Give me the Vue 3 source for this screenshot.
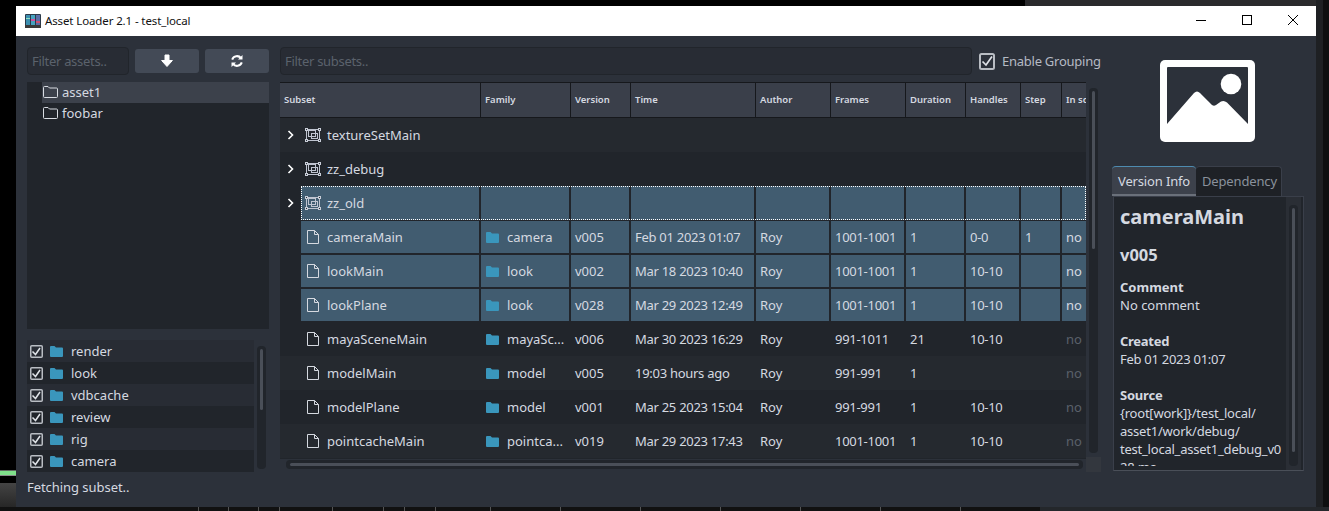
<script setup>
const families = ['render', 'look', 'vdbcache', 'review', 'rig', 'camera']
const cols = ['Subset', 'Family', 'Version', 'Time', 'Author', 'Frames', 'Duration', 'Handles', 'Step', 'In scene']
const groups = [
  { name: 'textureSetMain', alt: true },
  { name: 'zz_debug' },
  { name: 'zz_old', sel: true, focus: true }
]
const rows = [
  { name: 'cameraMain', fam: 'camera', ver: 'v005', time: 'Feb 01 2023 01:07', fr: '1001-1001', dur: '1', han: '0-0', step: '1', sel: true, alt: true },
  { name: 'lookMain', fam: 'look', ver: 'v002', time: 'Mar 18 2023 10:40', fr: '1001-1001', dur: '1', han: '10-10', step: '', sel: true },
  { name: 'lookPlane', fam: 'look', ver: 'v028', time: 'Mar 29 2023 12:49', fr: '1001-1001', dur: '1', han: '10-10', step: '', sel: true, alt: true },
  { name: 'mayaSceneMain', fam: 'mayaSc...', ver: 'v006', time: 'Mar 30 2023 16:29', fr: '991-1011', dur: '21', han: '10-10', step: '' },
  { name: 'modelMain', fam: 'model', ver: 'v005', time: '19:03 hours ago', fr: '991-991', dur: '1', han: '', step: '', alt: true },
  { name: 'modelPlane', fam: 'model', ver: 'v001', time: 'Mar 25 2023 15:04', fr: '991-991', dur: '1', han: '10-10', step: '' },
  { name: 'pointcacheMain', fam: 'pointca...', ver: 'v019', time: 'Mar 29 2023 17:43', fr: '1001-1001', dur: '1', han: '10-10', step: '', alt: true }
]
</script>

<template>
  <div class="desktop">
    <div class="strip-top"></div>
    <div class="strip-left"></div>
    <div class="strip-right"></div>
    <svg class="strip-bottom" width="1329" height="4" viewBox="0 0 1329 4">
      <path d="M198.500 0V4M228.500 0V4M258.500 0V4M279.500 0V4M332.500 0V4M383.500 0V4M404.500 0V4M435.500 0V4M490.500 0V4M560.500 0V4M640.500 0V4M720.500 0V4M800.500 0V4M880.500 0V4M960.500 0V4" stroke="#555" fill="none" />
    </svg>
    <div class="window">
      <header class="titlebar">
        <svg class="appicon" viewBox="0 0 16 16" width="16" height="16">
          <rect x="0" y="1" width="16" height="14" rx="1" fill="#2b3a4a" />
          <rect x="1" y="2" width="4" height="10" fill="#3c8fb0" />
          <rect x="6" y="2" width="4" height="10" fill="#46a3c0" />
          <rect x="11" y="2" width="4" height="10" fill="#5a6fa8" />
          <rect x="6" y="6" width="4" height="2" fill="#d050a0" />
          <rect x="11" y="8" width="4" height="2" fill="#d05070" />
          <rect x="1" y="5" width="4" height="1" fill="#8fe0c0" />
          <rect x="0" y="12" width="16" height="3" fill="#3a3a3a" />
        </svg>
        <span class="title">Asset Loader 2.1 - test_local</span>
        <div class="winbtns">
          <svg width="10" height="10" viewBox="0 0 10 10"><path d="M0 5.500H10" stroke="#000" fill="none" /></svg>
          <svg width="10" height="10" viewBox="0 0 10 10"><rect x=".5" y=".5" width="9" height="9" stroke="#000" fill="none" /></svg>
          <svg width="10" height="10" viewBox="0 0 10 10"><path d="M0 0L10 10M10 0L0 10" stroke="#000" fill="none" /></svg>
        </div>
      </header>

      <div class="content">
        <aside class="left">
          <div class="toolbar">
            <div class="input assets">Filter assets..</div>
            <button class="btn">
              <svg width="14" height="14" viewBox="0 0 14 14"><path d="M5 1h4v5.500h3.400L7 12.500 1.600 6.500H5z" fill="#fff" stroke="#fff" stroke-linejoin="round" /></svg>
            </button>
            <button class="btn">
              <svg width="14" height="14" viewBox="0 0 14 14" fill="none" stroke="#fff" stroke-width="2">
                <path d="M2.200 5.600A5 5 0 0 1 11 4.200" />
                <path d="M11.800 8.400A5 5 0 0 1 3 9.800" />
                <path d="M12.500 1v4.500H8z" fill="#fff" stroke="none" />
                <path d="M1.500 13V8.500H6z" fill="#fff" stroke="none" />
              </svg>
            </button>
          </div>
          <div class="tree">
            <div class="tree-row on">
              <svg class="folder" width="15" height="12" viewBox="0 0 15 12"><path d="M1.500 11.500a1 1 0 0 1-1-1V1.500a1 1 0 0 1 1-1h3.500l1.500 1.500h7a1 1 0 0 1 1 1v7.500a1 1 0 0 1-1 1z" fill="none" stroke="#d8dce2" /></svg>
              <span>asset1</span>
            </div>
            <div class="tree-row">
              <svg class="folder" width="15" height="12" viewBox="0 0 15 12"><path d="M1.500 11.500a1 1 0 0 1-1-1V1.500a1 1 0 0 1 1-1h3.500l1.500 1.500h7a1 1 0 0 1 1 1v7.500a1 1 0 0 1-1 1z" fill="none" stroke="#d8dce2" /></svg>
              <span>foobar</span>
            </div>
          </div>
          <div class="families">
            <div class="fam-list">
              <div v-for="f in families" :key="f" class="fam-row">
                <svg class="check" width="13" height="13" viewBox="0 0 13 13"><rect x=".75" y=".75" width="11.500" height="11.500" rx="1" fill="none" stroke="#b9bdc3" stroke-width="1.500" /><path d="M2.500 6.500l3 3 4.500-6.500" fill="none" stroke="#e0e3e8" stroke-width="1.500" /></svg>
                <svg class="ficon" width="13" height="11" viewBox="0 0 13 11"><path d="M0 1a1 1 0 0 1 1-1h3.500l1.500 1.500h6a1 1 0 0 1 1 1V10a1 1 0 0 1-1 1H1a1 1 0 0 1-1-1z" fill="#3a96bc" /></svg>
                <span>{{ f }}</span>
              </div>
            </div>
            <div class="vbar fam-bar"><div class="vthumb"></div></div>
          </div>
        </aside>

        <main class="middle">
          <div class="toolbar">
            <div class="input subsets">Filter subsets..</div>
            <label class="group">
              <svg width="16" height="17" viewBox="0 0 16 17"><rect x="1" y="1" width="14" height="15" rx="1.500" fill="none" stroke="#b9bdc3" stroke-width="2" /><path d="M3.500 8.500l3.500 3.500 6-8.500" fill="none" stroke="#e0e3e8" stroke-width="1.700" /></svg>
              <span>Enable Grouping</span>
            </label>
          </div>
          <div class="table-wrap">
            <div class="table-col">
              <div class="table">
                <div class="grid head">
                  <div v-for="c in cols" :key="c" class="th">{{ c }}</div>
                </div>
                <div v-for="g in groups" :key="g.name" class="line" :class="{ alt: g.alt, sel: g.sel, focus: g.focus }">
                  <div class="branch">
                    <svg width="8" height="10" viewBox="0 0 8 10"><path d="M1.500 1l4 4-4 4" fill="none" stroke="#fff" stroke-width="1.600" /></svg>
                  </div>
                  <div class="grid cells">
                    <div class="td first">
                      <svg class="gicon" width="16" height="15" viewBox="0 0 16 15" fill="none" stroke="#bfc4d0">
                        <rect x="1.500" y="1.500" width="13" height="11" />
                        <rect x="3.500" y="2.500" width="7" height="6" />
                        <rect x="6.500" y="5.500" width="6" height="5" />
                        <g fill="#2c313a" stroke="#c9ced8"><rect x=".5" y=".5" width="2" height="2" /><rect x="13.500" y=".5" width="2" height="2" /><rect x=".5" y="11.500" width="2" height="2" /><rect x="13.500" y="11.500" width="2" height="2" /></g>
                      </svg>
                      <span class="name">{{ g.name }}</span>
                    </div>
                    <div v-for="n in 9" :key="n" class="td"></div>
                  </div>
                </div>
                <div v-for="r in rows" :key="r.name" class="line" :class="{ alt: r.alt, sel: r.sel }">
                  <div class="branch"></div>
                  <div class="grid cells">
                    <div class="td first">
                      <svg class="dicon" width="12" height="14" viewBox="0 0 12 14"><path d="M.5.500H7.500L11.500 4.500V13.500H.5zM7.500.500V4.500H11.500" fill="none" stroke="#d5d9e0" /></svg>
                      <span class="name">{{ r.name }}</span>
                    </div>
                    <div class="td fam">
                      <svg class="ficon" width="13" height="11" viewBox="0 0 13 11"><path d="M0 1a1 1 0 0 1 1-1h3.500l1.500 1.500h6a1 1 0 0 1 1 1V10a1 1 0 0 1-1 1H1a1 1 0 0 1-1-1z" fill="#3a96bc" /></svg>
                      <span>{{ r.fam }}</span>
                    </div>
                    <div class="td">{{ r.ver }}</div>
                    <div class="td num">{{ r.time }}</div>
                    <div class="td">Roy</div>
                    <div class="td num">{{ r.fr }}</div>
                    <div class="td">{{ r.dur }}</div>
                    <div class="td num">{{ r.han }}</div>
                    <div class="td">{{ r.step }}</div>
                    <div class="td no">no</div>
                  </div>
                </div>
              </div>
              <div class="hbar"><div class="hthumb"></div></div>
            </div>
            <div class="side">
              <div class="vbar tbl-bar"><div class="vthumb"></div></div>
              <div class="corner"></div>
            </div>
          </div>
        </main>

        <aside class="right">
          <div class="thumb-wrap">
            <svg width="95" height="82" viewBox="0 0 95 82">
              <rect x="0" y="0" width="95" height="82" rx="5" fill="#fff" />
              <rect x="7" y="7" width="81" height="68" fill="#2c313a" rx="1" />
              <path d="M7 64L34 33Q37 30 40 33L52 45Q54 46.500 56 45L61 41.500Q64 40 67 42.500L88 64V75H7z" fill="#fff" />
              <circle cx="71" cy="24" r="10.300" fill="#fff" />
            </svg>
          </div>
          <div class="tabs">
            <div class="tab on">Version Info</div>
            <div class="tab">Dependency</div>
          </div>
          <div class="pane">
            <div class="pane-text">
              <h1>cameraMain</h1>
              <h2>v005</h2>
              <p class="sect"><b>Comment</b><br />No comment</p>
              <p class="sect num"><b>Created</b><br />Feb 01 2023 01:07</p>
              <p class="sect src"><b>Source</b><br />{root[work]}/test_local/<br />asset1/work/debug/<br />test_local_asset1_debug_v0<br />28.ma</p>
            </div>
            <div class="gutter"><div class="vbar pane-bar"><div class="vthumb"></div></div></div>
          </div>
        </aside>
      </div>

      <footer class="status">Fetching subset..</footer>
    </div>
  </div>
</template>

<style>
html, body { margin: 0; background: #000; overflow: hidden; }
</style>

<style scoped>
.desktop {
  position: relative;
  width: 1329px;
  height: 511px;
  overflow: hidden;
  box-sizing: border-box;
  padding: 6px 0 0 16px;
  background: #000;
  font-family: "Noto Sans", sans-serif;
  font-size: 13px;
  color: #d5d9e0;
}
.strip-top { position: absolute; left: 1025px; right: 0; top: 0; height: 6px; background: #2a2a2c; }
.strip-left { position: absolute; left: 0; top: 469px; width: 16px; height: 42px; background: linear-gradient(#000 0, #000 1px, #5f6a60 1px, #5f6a60 2px, #7fe08a 2px, #7fe08a 6px, #8a8a8a 6px, #8a8a8a 7px, #000 7px, #000 14px, #444 14px, #222 42px); }
.strip-right { position: absolute; left: 1316px; right: 0; top: 0; bottom: 0; background: #1e2023; border-right: 6px solid #0e0f10; box-sizing: border-box; }
.strip-bottom { position: absolute; left: 0; top: 507px; background: linear-gradient(90deg, #111 0, #111 1040px, #24272b 1040px); }
.window {
  position: relative;
  width: 1300px;
  height: 501px;
  display: flex;
  flex-direction: column;
  background: #2c313a;
}
.titlebar {
  height: 30px;
  flex: none;
  box-sizing: border-box;
  background: #fff;
  display: flex;
  align-items: center;
  padding-left: 9px;
  padding-bottom: 1px;
  color: #000;
}
.appicon { flex: none; }
.title { margin-left: 4px; font-size: 11.500px; letter-spacing: -0.12px; color: #111; }
.winbtns {
  margin-left: auto;
  display: flex;
  width: 138px;
  justify-content: space-around;
  align-items: center;
  padding-bottom: 1px;
}
.content {
  flex: none;
  height: 425px;
  display: grid;
  grid-template-columns: 242px 821px 192px;
  column-gap: 11px;
  padding-left: 11px;
  padding-top: 11px;
}
.left, .middle, .right { display: flex; flex-direction: column; min-width: 0; height: 425px; }
.toolbar { display: flex; align-items: center; height: 28px; flex: none; }
.input {
  box-sizing: border-box;
  height: 28px;
  line-height: 26px;
  border: 1px solid #21252b;
  border-radius: 4px;
  background: #282c34;
  color: #5b626c;
  padding-left: 4px;
  letter-spacing: -0.3px;
  flex: none;
}
.assets { width: 102px; }
.subsets { width: 692px; }
.btn {
  width: 64px;
  height: 24px;
  margin-left: 6px;
  border: 0;
  border-radius: 3px;
  background: #434a56;
  padding: 0;
  display: flex;
  align-items: center;
  justify-content: center;
}
.tree {
  margin-top: 7px;
  height: 247px;
  flex: none;
  background: #21252b;
  padding-left: 15px;
}
.tree-row { display: flex; align-items: center; height: 21px; box-sizing: border-box; padding: 0 0 2px 1px; gap: 4px; }
.tree-row.on { background: #3c414b; }
.folder { flex: none; }
.families { margin-top: 11px; display: flex; height: 132px; flex: none; }
.fam-list { width: 227px; flex: none; }
.fam-row { display: flex; align-items: center; height: 22px; padding-left: 3px; }
.fam-row:nth-child(odd) { background: #282c34; }
.fam-row:nth-child(even) { background: #21252b; }
.check { flex: none; margin-right: 7px; }
.fam-row .ficon { margin-right: 8px; }
.ficon { flex: none; }
.vbar {
  box-sizing: border-box;
  width: 9px;
  background: #21252b;
  border-radius: 4px;
  padding: 3px 3px 0;
}
.vthumb { width: 100%; background: #4a4f58; border-radius: 2px; }
.fam-bar { margin-left: 3px; margin-top: 6px; height: 123px; }
.fam-bar .vthumb { height: 61px; }

.group { margin-left: 7px; display: flex; align-items: center; gap: 7px; color: #b5bac4; white-space: nowrap; letter-spacing: -0.25px; }
.middle .toolbar svg { flex: none; }
.table-wrap { margin-top: 7px; display: flex; height: 390px; flex: none; }
.table-col { width: 806px; flex: none; }
.table { height: 377px; overflow: hidden; background: #21252b; border-top: 1px solid #16181c; box-sizing: border-box; }
.grid {
  display: grid;
  grid-template-columns: 201px 90px 60px 125px 75px 75px 60px 55px 41px 1fr;
}
.head { background: #16181c; height: 35px; border-bottom: 1px solid #16181c; box-sizing: border-box; }
.th {
  background: #3a3f4a;
  font-size: 9.500px;
  font-weight: 600;
  color: #d5d9e0;
  line-height: 34px;
  padding-left: 4px;
  border-right: 1px solid #16181c;
  white-space: nowrap;
  overflow: hidden;
}
.th:last-child { border-right: 0; }
.line { display: flex; height: 34px; background: #21252b; }
.line.alt { background: #25292f; }
.branch { width: 21px; flex: none; display: flex; align-items: center; justify-content: center; }
.sel .branch { background: #21252b; }
.cells { width: 785px; grid-template-columns: 180px 90px 60px 125px 75px 75px 60px 55px 41px 1fr; }
.td {
  display: flex;
  align-items: center;
  padding-left: 4px;
  white-space: nowrap;
  overflow: hidden;
  height: 34px;
  box-sizing: border-box;
}
.num { letter-spacing: -0.28px; }
.sel .td { background: #415c70; border-right: 2px solid #21252b; box-shadow: inset 0 1px #21252b, inset 0 -1px #21252b; }
.sel .td:last-child { border-right: 0; }
.focus .td { box-shadow: none; }
.focus .cells { outline: 1px dotted #fff; outline-offset: -1px; }
.first { padding-left: 5px; }
.gicon { margin-left: -1px; margin-right: 6px; flex: none; }
.dicon { margin-left: 1px; margin-right: 8px; flex: none; }
.fam { padding-left: 5px; }
.fam .ficon { margin-right: 8px; }
.no { color: #5a606a; }
.sel .no { color: #d5d9e0; }
.hbar {
  height: 9px;
  margin-top: 1px;
  margin-left: 6px;
  width: 797px;
  background: #21252b;
  border-radius: 4px;
  padding: 3px 4px;
  box-sizing: border-box;
}
.hthumb { height: 3px; background: #4a4f58; border-radius: 2px; width: 100%; }
.side { width: 15px; flex: none; }
.tbl-bar { margin-left: 3px; margin-top: 6px; height: 365px; }
.tbl-bar .vthumb { height: 158px; }
.corner { margin-top: 4px; width: 15px; height: 15px; background: #33373e; }

.thumb-wrap { height: 96px; flex: none; padding-top: 13px; padding-left: 48px; box-sizing: border-box; }
.thumb-wrap svg { display: block; }
.tabs { display: flex; margin-top: 23px; height: 30px; flex: none; }
.tab {
  box-sizing: border-box;
  height: 30px;
  line-height: 29px;
  padding: 0 6px;
  background: #1e2126;
  color: #8a919c;
  border-radius: 4px 4px 0 0;
  border-top: 1px solid #3a3f4a;
  white-space: nowrap;
  letter-spacing: -0.15px;
}
.tab.on { background: #3c414b; color: #d5d9e0; border-top-color: #4e8bb0; width: 84px; border-bottom: 2px solid #6a707a; }
.tabs .tab:last-child { width: 86px; border-right: 1px solid #3a3f4a; }
.pane {
  box-sizing: border-box;
  width: 191px;
  margin-left: 1px;
  height: 275px;
  border: 1px solid #3a3f4a;
  border-bottom-color: #4a4f58;
  background: #21252b;
  display: flex;
  overflow: hidden;
}
.pane-text { width: 172px; flex: none; padding-left: 6px; box-sizing: border-box; line-height: 18px; height: 269px; overflow: hidden; }
.pane-text h1 { font-size: 20px; font-weight: 700; margin: 6px 0 0; line-height: 28px; white-space: nowrap; color: #d5d9e0; }
.pane-text h2 { font-size: 16.500px; font-weight: 700; margin: 14px 0 0; line-height: 20px; color: #d5d9e0; }
.sect { margin: 18px 0 0; white-space: nowrap; }
.pane-text h2 + .sect { margin-top: 13px; }
.src { letter-spacing: -0.22px; }
.gutter { width: 15px; flex: none; background: #2a2e35; height: 100%; padding-left: 3px; padding-top: 8px; box-sizing: border-box; }
.pane-bar { height: 261px; }
.pane-bar .vthumb { height: 244px; }
.status { flex: 1; padding-left: 11px; line-height: 19px; padding-top: 6px; letter-spacing: -0.05px; }
</style>
